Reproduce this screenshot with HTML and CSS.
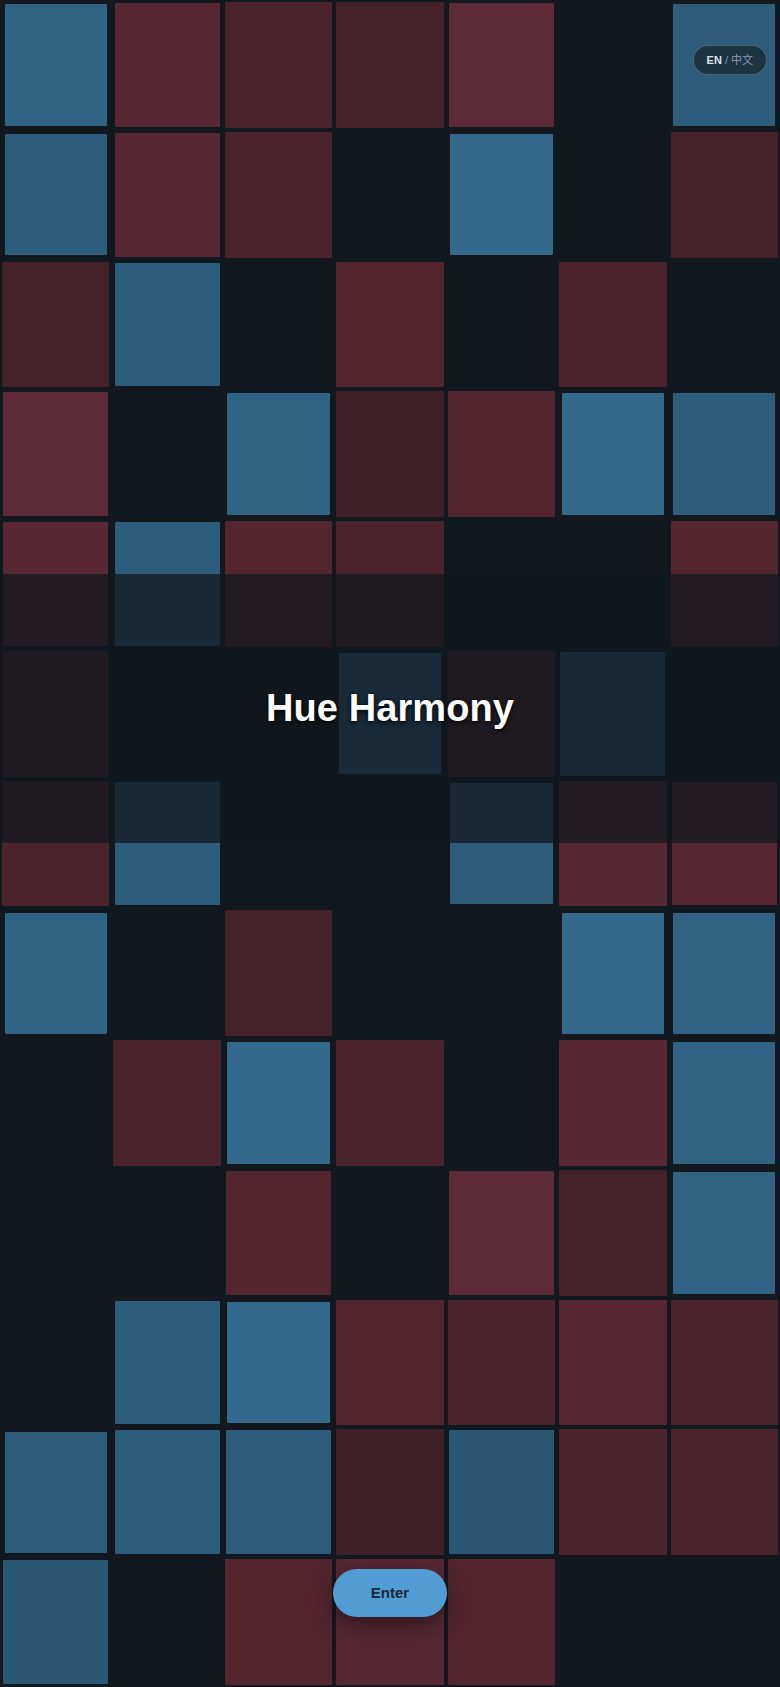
FILE: index.html
```html
<!DOCTYPE html>
<html lang="en">
<head>
<meta charset="utf-8">
<title>Hue Harmony</title>
<link rel="stylesheet" href="styles.css">
</head>
<body>
<main class="stage">
  <div class="grid">
    <!-- row 0 -->
    <div class="t b2 m4"></div><div class="t r2 m3"></div><div class="t r4 m2"></div><div class="t r5 m2"></div><div class="t r1 m3"></div><div></div><div class="t b3 m4"></div>
    <!-- row 1 -->
    <div class="t b3 m4"></div><div class="t r2 m3"></div><div class="t r4 m2"></div><div></div><div class="t b1 m4"></div><div></div><div class="t r5 m2"></div>
    <!-- row 2 -->
    <div class="t r5 m2"></div><div class="t b3 m3"></div><div></div><div class="t r3 m2"></div><div></div><div class="t r4 m2"></div><div></div>
    <!-- row 3 -->
    <div class="t r1 m3"></div><div></div><div class="t b2 m4"></div><div class="t r6 m2"></div><div class="t r3 m2"></div><div class="t b1 m4"></div><div class="t b3 m4"></div>
    <!-- row 4 -->
    <div class="t r2 m3"></div><div class="t b3 m3"></div><div class="t r3 m2"></div><div class="t r4 m2"></div><div></div><div></div><div class="t r3 m2"></div>
    <!-- row 5 -->
    <div class="t r4 m2"></div><div></div><div></div><div class="t b2 m4"></div><div class="t r4 m2"></div><div class="t b3 m3"></div><div></div>
    <!-- row 6 -->
    <div class="t r4 m2"></div><div class="t b3 m3"></div><div></div><div></div><div class="t b3 m4"></div><div class="t r2 m2"></div><div class="t r2 m3"></div>
    <!-- row 7 -->
    <div class="t b2 m4"></div><div></div><div class="t r5 m2"></div><div></div><div></div><div class="t b1 m4"></div><div class="t b2 m4"></div>
    <!-- row 8 -->
    <div></div><div class="t r4 m2"></div><div class="t b1 m4"></div><div class="t r4 m2"></div><div></div><div class="t r2 m2"></div><div class="t b2 m4"></div>
    <!-- row 9 -->
    <div></div><div></div><div class="t r3 m3"></div><div></div><div class="t r1 m3"></div><div class="t r5 m2"></div><div class="t b2 m4"></div>
    <!-- row 10 -->
    <div></div><div class="t b3 m3"></div><div class="t b1 m4"></div><div class="t r3 m2"></div><div class="t r4 m2"></div><div class="t r2 m2"></div><div class="t r4 m2"></div>
    <!-- row 11 -->
    <div class="t b3 m4"></div><div class="t b3 m3"></div><div class="t b3 m3"></div><div class="t r6 m2"></div><div class="t b4 m3"></div><div class="t r4 m2"></div><div class="t r4 m2"></div>
    <!-- row 12 -->
    <div class="t b4 m3"></div><div></div><div class="t r3 m2"></div><div class="t r2 m2"></div><div class="t r3 m2"></div><div></div><div></div>
  </div>

  <div class="content">
    <section class="band">
      <h1 class="title">Hue Harmony</h1>
    </section>
    <button class="enter" type="button">Enter</button>
  </div>

  <button class="lang" type="button"><span class="lang-on">EN</span> / 中文</button>
</main>
</body>
</html>
```

FILE: styles.css
```css
* { box-sizing: border-box; }

html, body {
  margin: 0;
  padding: 0;
  background: #11181e;
  font-family: "Liberation Sans", Arial, sans-serif;
}

.stage {
  position: relative;
  width: 100vw;
  height: 100vh;
  overflow: hidden;
}

.grid {
  display: grid;
  grid-template-columns: repeat(7, 1fr);
  grid-template-rows: repeat(13, 1fr);
  width: 100%;
  height: 100%;
}

.t { border-radius: 1px; }

.m2 { margin: 2px; }
.m3 { margin: 3px 3.3px; }
.m4 { margin: 4.2px 4.6px; }

.b1 { background: #33698b; }
.b2 { background: #306283; }
.b3 { background: #2e5d7c; }
.b4 { background: #2b5872; }

.r1 { background: #5d2a37; }
.r2 { background: #572834; }
.r3 { background: #52252f; }
.r4 { background: #4a232c; }
.r5 { background: #45212a; }
.r6 { background: #3f1f28; }

.content {
  position: absolute;
  inset: 0;
  display: flex;
  flex-direction: column;
  align-items: center;
}

.band {
  margin-top: 574px;
  width: 100%;
  height: 269px;
  background: rgba(17, 24, 30, 0.74);
  display: flex;
  align-items: center;
  justify-content: center;
}

.title {
  margin: 0;
  color: #ffffff;
  font-size: 38px;
  font-weight: 700;
  line-height: 1;
  letter-spacing: 0.1px;
  text-shadow: 0 0 2px #000, 0 2px 5px rgba(0, 0, 0, 0.85);
  padding-bottom: 1px;
}

.enter {
  margin-top: auto;
  margin-bottom: 70px;
  border: none;
  border-radius: 999px;
  background: #529dd3;
  color: #1a2a3a;
  font-family: "Liberation Sans", Arial, sans-serif;
  font-size: 15px;
  font-weight: 700;
  line-height: 18px;
  padding: 15px 38px;
  box-shadow: 0 8px 22px rgba(0, 0, 0, 0.45);
  cursor: pointer;
}

.lang {
  position: absolute;
  top: 45px;
  right: 13px;
  border: 1px solid rgba(200, 220, 235, 0.28);
  border-radius: 999px;
  background: rgba(22, 34, 44, 0.72);
  color: #8a9daa;
  font-family: "Liberation Sans", "Noto Sans CJK SC", sans-serif;
  font-size: 11px;
  line-height: 14px;
  padding: 7px 13px;
  cursor: pointer;
}

.lang-on {
  color: #dbe4eb;
  font-weight: 700;
}
```
